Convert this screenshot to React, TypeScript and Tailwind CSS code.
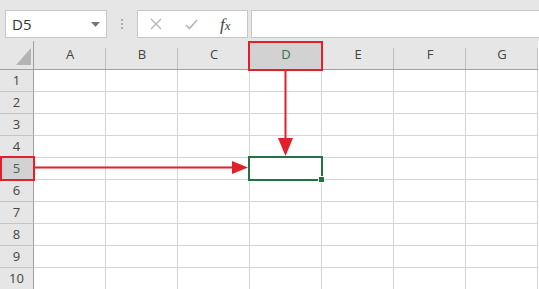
import React from 'react';

// Excel-style sheet: name box, formula bar, grid with D5 selected

const COLS = ['A', 'B', 'C', 'D', 'E', 'F', 'G'];
const ROWS = [1, 2, 3, 4, 5, 6, 7, 8, 9, 10];

export default function App() {
    return (
        <div className="relative w-[539px] h-[289px] overflow-hidden bg-white text-[#444]" style={{ fontFamily: '"Open Sans", "Noto Sans", sans-serif' }}>
            {/* Formula bar */}
            <div className="h-[41px] bg-[#e6e6e6] flex items-start pt-[10px] pl-[5px]">
                <div className="w-[102px] h-[28px] bg-white border border-[#c6c6c6] flex items-center justify-between pl-[6px] pr-[6px]">
                    <span className="text-[15px] text-[#333] leading-none">D5</span>
                    <svg width="9" height="5" viewBox="0 0 9 5"><path d="M0 0h9L4.5 5z" fill="#777" /></svg>
                </div>
                <div className="w-[30px] h-[28px] flex flex-col items-center justify-center gap-[2px]">
                    <span className="w-[2px] h-[2px] bg-[#aaa]" />
                    <span className="w-[2px] h-[2px] bg-[#aaa]" />
                    <span className="w-[2px] h-[2px] bg-[#aaa]" />
                </div>
                <div className="w-[111px] h-[28px] bg-white border border-[#c6c6c6] flex items-center">
                    <svg className="ml-[12px]" width="12" height="12" viewBox="0 0 12 12"><path d="M1 1l10 10M11 1L1 11" stroke="#b5b5b5" strokeWidth="1.3" /></svg>
                    <svg className="ml-[23px]" width="13" height="11" viewBox="0 0 13 11"><path d="M1 6l3.5 3.5L12 1" stroke="#b5b5b5" strokeWidth="1.6" fill="none" /></svg>
                    <span className="ml-[22px] text-[17px] italic text-[#444] leading-none" style={{ fontFamily: '"Liberation Serif", serif' }}>f<span className="text-[13px]">x</span></span>
                </div>
                <div className="ml-[3px] flex-1 h-[28px] bg-white border border-[#c6c6c6] border-r-0" />
            </div>

            {/* Grid */}
            <div className="grid grid-cols-[34px_repeat(7,72px)] grid-rows-[29px_repeat(10,22px)]">
                <div className="bg-[#e6e6e6] border-r border-b border-[#9f9f9f] relative">
                    <svg className="absolute left-[16px] top-[7px]" width="15" height="17" viewBox="0 0 15 17"><path d="M15 0V17H0z" fill="#b4b4b4" /></svg>
                </div>
                {COLS.map((c) => (
                    <div key={c} className={`relative flex items-center justify-center text-[13px] border-b border-[#9f9f9f] ${c === 'D' ? 'bg-[#d2d2d2] text-[#3d6b4e]' : 'bg-[#e6e6e6]'}`}>
                        <span className="absolute right-0 top-[7px] bottom-0 w-px bg-[#c0c0c0]" />
                        {c}
                    </div>
                ))}
                {ROWS.map((r) => (
                    <React.Fragment key={r}>
                        <div className={`flex items-center justify-center text-[13px] border-r border-b border-r-[#9f9f9f] border-b-[#c4c4c4] ${r === 5 ? 'bg-[#d2d2d2] text-[#3d6b4e]' : 'bg-[#e6e6e6]'}`}>{r}</div>
                        {COLS.map((c) => (
                            <div key={c} className="border-r border-b border-[#d4d4d4]" />
                        ))}
                    </React.Fragment>
                ))}
            </div>

            {/* Selection + red highlights */}
            <div className="absolute left-[248px] top-[156px] w-[75px] h-[25px] border-2 border-[#217346]">
                <span className="absolute -right-[4px] -bottom-[4px] w-[5px] h-[5px] bg-[#217346] border border-white box-content" />
            </div>
            <div className="absolute left-[248px] top-[41px] w-[75px] h-[30px] border-2 border-[#e0212a]" />
            <div className="absolute left-0 top-[156px] w-[35px] h-[25px] border-2 border-[#e0212a]" />

            <svg className="absolute inset-0 pointer-events-none" width="539" height="289">
                <line x1="285.5" y1="71" x2="285.5" y2="140" stroke="#e0212a" strokeWidth="2" />
                <path d="M278 138h15l-7.5 18z" fill="#e0212a" />
                <line x1="35" y1="167.5" x2="235" y2="167.5" stroke="#e0212a" strokeWidth="2" />
                <path d="M232 161v13l16-6.5z" fill="#e0212a" />
            </svg>
        </div>
    );
}
